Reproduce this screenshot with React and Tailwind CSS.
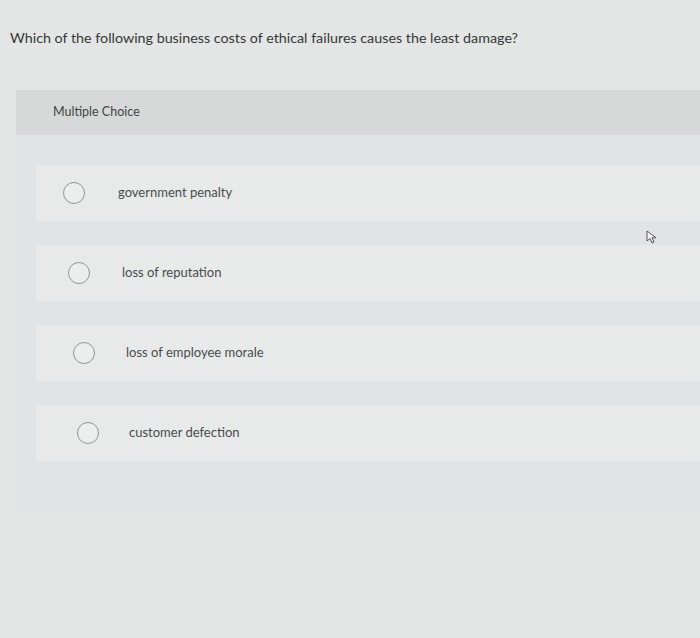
import React from "react";

const options = [
  { label: "government penalty", pad: "pl-[27px]", gap: "gap-[33px]" },
  { label: "loss of reputation", pad: "pl-[32px]", gap: "gap-[32px]" },
  { label: "loss of employee morale", pad: "pl-[37px]", gap: "gap-[31px]" },
  { label: "customer defection", pad: "pl-[41px]", gap: "gap-[30px]" },
];

function Radio() {
  return (
    <span className="block w-[22px] h-[22px] rounded-full border-[1.5px] border-[#939695] bg-[#eceeed] shrink-0" />
  );
}

export default function App() {
  return (
    <div
      className="w-[700px] h-[638px] overflow-hidden bg-[#e3e6e4] text-[#3d3f3f]"
      style={{ fontFamily: "Lato, 'Open Sans', sans-serif" }}
    >
      <div className="pt-[28px] pl-[10px] text-[14.3px] leading-[20px] text-[#363838]">
        Which of the following business costs of ethical failures causes the least damage?
      </div>

      <div className="mt-[42px] ml-[16px] bg-[#e1e4e4]">
        <div className="h-[45px] bg-[#d6d9d7] flex items-center pl-[37px] text-[12.5px] text-[#444]">
          Multiple Choice
        </div>
        <div className="pt-[30px] pb-[50px] flex flex-col gap-[24px] relative">
          {options.map((o) => (
            <div
              key={o.label}
              className={`h-[56px] ml-[20px] bg-[#e8eaea] flex items-center ${o.pad} ${o.gap}`}
            >
              <Radio />
              <span className="text-[13px] text-[#4a4c4c]">{o.label}</span>
            </div>
          ))}
          <svg
            className="absolute right-[42px] top-[95px]"
            width="12"
            height="14"
            viewBox="0 0 12 14"
          >
            <path d="M1 1 L1 11 L4 8.5 L6 13 L8 12 L6 7.8 L10 7.8 Z" fill="#f4f4f4" stroke="#555" strokeWidth="1" strokeLinejoin="round" />
          </svg>
        </div>
      </div>
    </div>
  );
}
